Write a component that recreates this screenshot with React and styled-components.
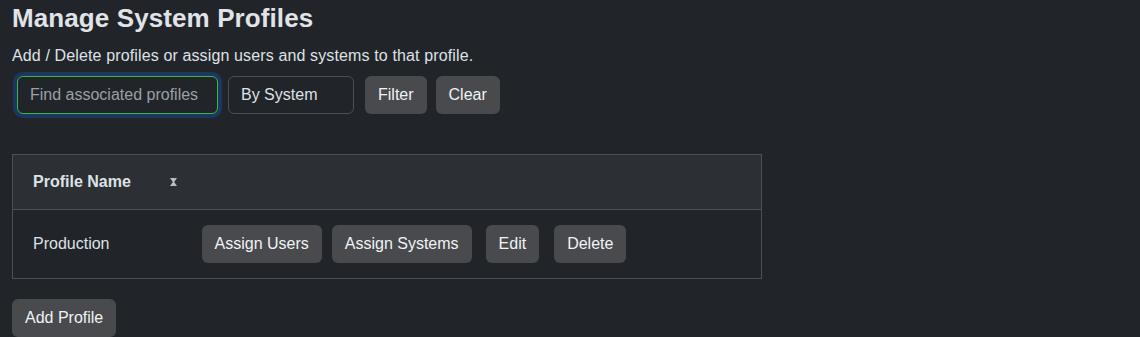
import React from "react";
import styled, { createGlobalStyle } from "styled-components";

const Global = createGlobalStyle`
  html, body { margin: 0; padding: 0; background: #212529; }
  body {
    font-family: "Liberation Sans", Arial, sans-serif;
    color: #dee2e6;
    font-size: 16px;
    line-height: 1.5;
  }
  * { box-sizing: border-box; }
`;

const Page = styled.div`
  padding: 0 12px;
  height: 337px;
  overflow: hidden;
`;

const Title = styled.h1`
  margin: 0;
  padding-top: 1px;
  font-size: 26px;
  font-weight: 700;
  line-height: 34px;
  color: #e0e3e7;
  letter-spacing: 0.1px;
`;

const Subtitle = styled.p`
  margin: 9px 0 0;
  font-size: 16px;
  line-height: 24px;
  letter-spacing: 0.13px;
  color: #dee2e6;
`;

const FilterBar = styled.form`
  display: flex;
  align-items: center;
  gap: 10px;
  margin: 8px 0 0 5px;
`;

const Field = styled.input`
  height: 38px;
  width: ${(p) => p.$w}px;
  padding: 0 12px;
  font-family: inherit;
  font-size: 16px;
  color: #dee2e6;
  background: #212529;
  border: 1px solid ${(p) => (p.$focus ? "#3bb54e" : "#495057")};
  border-radius: 6px;
  outline: none;
  box-shadow: ${(p) => (p.$focus ? "0 0 0 4px #1c375e" : "none")};
  &::placeholder { color: #9aa0a6; }
`;

const Button = styled.button`
  height: 38px;
  padding: 0 ${(p) => p.$px || 13}px;
  margin-left: ${(p) => p.$ml || 0}px;
  font-family: inherit;
  font-size: 16px;
  color: #f1f3f5;
  background: #484a4d;
  border: none;
  border-radius: 6px;
  cursor: pointer;
  white-space: nowrap;
`;

const Table = styled.table`
  margin-top: 40px;
  width: 750px;
  border-collapse: collapse;
  border: 1px solid #495057;
  table-layout: fixed;
`;

const HeadCell = styled.th`
  height: 55px;
  padding: 0 ${(p) => p.$pr ?? 20}px 0 20px;
  text-align: left;
  font-weight: 700;
  white-space: nowrap;
  background: #2c3034;
  border-bottom: 1px solid #495057;
  color: #dee2e6;
  width: ${(p) => (p.$w ? p.$w + "px" : "auto")};
`;

const HeadInner = styled.div`
  display: flex;
  align-items: center;
  justify-content: space-between;
`;

const Cell = styled.td`
  height: 69px;
  padding: 0 20px;
  vertical-align: middle;
`;

const Actions = styled.div`
  display: flex;
  align-items: center;
`;

const Footer = styled.div`
  margin-top: 20px;
`;

const SortIcon = () => (
  <svg width="9" height="10" viewBox="0 0 9 10">
    <path d="M1 1h7L5.2 5 8 9H1l2.8-4z" fill="#b8bdc2" />
  </svg>
);

export default function App() {
  return (
    <>
      <Global />
      <Page>
        <Title>Manage System Profiles</Title>
        <Subtitle>Add / Delete profiles or assign users and systems to that profile.</Subtitle>
        <FilterBar onSubmit={(e) => e.preventDefault()}>
          <Field $w={201} $focus placeholder="Find associated profiles" />
          <Field $w={126} defaultValue="By System" />
          <Button $ml={1}>Filter</Button>
          <Button $ml={-1}>Clear</Button>
        </FilterBar>
        <Table>
          <thead>
            <tr>
              <HeadCell $w={169} $pr={4}>
                <HeadInner>
                  <span>Profile Name</span>
                  <SortIcon />
                </HeadInner>
              </HeadCell>
              <HeadCell />
            </tr>
          </thead>
          <tbody>
            <tr>
              <Cell>Production</Cell>
              <Cell>
                <Actions>
                  <Button>Assign Users</Button>
                  <Button $ml={10}>Assign Systems</Button>
                  <Button $ml={14}>Edit</Button>
                  <Button $ml={15}>Delete</Button>
                </Actions>
              </Cell>
            </tr>
          </tbody>
        </Table>
        <Footer>
          <Button>Add Profile</Button>
        </Footer>
      </Page>
    </>
  );
}
